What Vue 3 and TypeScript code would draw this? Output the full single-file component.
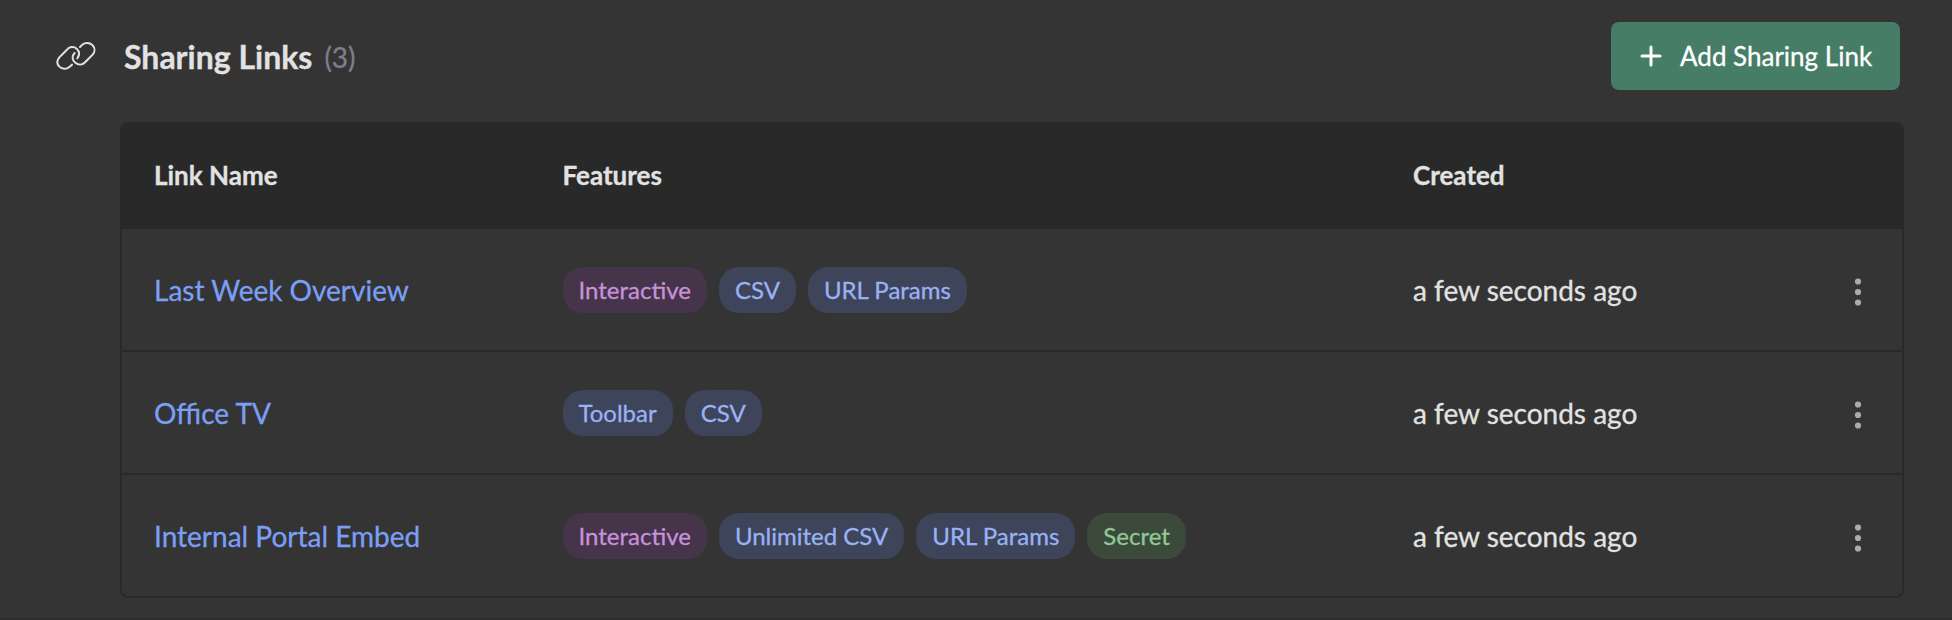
<script setup lang="ts">
type Tone = 'purple' | 'blue' | 'green'

interface Feature {
  label: string
  tone: Tone
}

interface SharingLink {
  name: string
  features: Feature[]
  created: string
}

const links: SharingLink[] = [
  {
    name: 'Last Week Overview',
    features: [
      { label: 'Interactive', tone: 'purple' },
      { label: 'CSV', tone: 'blue' },
      { label: 'URL Params', tone: 'blue' },
    ],
    created: 'a few seconds ago',
  },
  {
    name: 'Office TV',
    features: [
      { label: 'Toolbar', tone: 'blue' },
      { label: 'CSV', tone: 'blue' },
    ],
    created: 'a few seconds ago',
  },
  {
    name: 'Internal Portal Embed',
    features: [
      { label: 'Interactive', tone: 'purple' },
      { label: 'Unlimited CSV', tone: 'blue' },
      { label: 'URL Params', tone: 'blue' },
      { label: 'Secret', tone: 'green' },
    ],
    created: 'a few seconds ago',
  },
]
</script>

<template>
  <section class="panel">
    <header class="head">
      <svg class="chain" viewBox="0 0 180 150" fill="none" stroke="currentColor" stroke-width="6" stroke-linecap="round">
        <path d="M66 104L58 111C50 119 36 118 28 110C20 101 21 90 28 82L50 60C58 50 71 48 80 56C88 64 90 75 82 85" />
        <path d="M90 51L97 44C105 37 118 37 127 45C136 54 135 66 128 74L106 96C98 105 86 106 76 98C66 90 65 78 74 69" />
      </svg>
      <h2 class="title">Sharing Links</h2>
      <span class="count">({{ links.length }})</span>
      <button class="add" type="button">
        <svg class="plus" viewBox="0 0 22 22" stroke="currentColor" stroke-width="3" stroke-linecap="round">
          <path d="M11 2V20M2 11H20" />
        </svg>
        <span>Add Sharing Link</span>
      </button>
    </header>

    <div class="table">
      <div class="row row-head">
        <span>Link Name</span>
        <span>Features</span>
        <span>Created</span>
      </div>
      <div v-for="link in links" :key="link.name" class="row">
        <a class="name">{{ link.name }}</a>
        <div class="tags">
          <span v-for="f in link.features" :key="f.label" class="tag" :class="f.tone">{{ f.label }}</span>
        </div>
        <span class="created">{{ link.created }}</span>
        <svg class="dots" viewBox="0 0 8 28" fill="currentColor">
          <circle cx="4" cy="3.5" r="3.1" />
          <circle cx="4" cy="14" r="3.1" />
          <circle cx="4" cy="24.5" r="3.1" />
        </svg>
      </div>
    </div>
  </section>
</template>

<style>
body {
  background: #343434;
}
</style>

<style scoped>
.panel {
  box-sizing: border-box;
  height: 620px;
  padding: 22px 48px 0 50px;
  border-bottom: 2px solid #2c2c2c;
  background: #343434;
  color: #e2e2e2;
  font-family: Lato, sans-serif;
  font-size: 28px;
  -webkit-text-stroke: 0.3px currentColor;
}

.head {
  display: flex;
  align-items: center;
  height: 68px;
  margin-bottom: 32px;
}

.chain {
  width: 60px;
  height: 50px;
  margin: 0 14px 2px 0;
}

.title {
  margin: 2px 0 0;
  font-size: 32px;
  font-weight: 700;
  line-height: 40px;
}

.count {
  margin: 2px 0 0 12px;
  color: #7e7e8a;
  font-size: 28px;
}

.add {
  display: flex;
  align-items: center;
  box-sizing: border-box;
  width: 289px;
  height: 68px;
  margin: 0 4px 0 auto;
  padding: 0 0 0 29px;
  border: 0;
  border-radius: 8px;
  background: #467d67;
  color: #fff;
  font: 26px Lato, sans-serif;
  -webkit-text-stroke: 0.3px currentColor;
}

.plus {
  width: 22px;
  height: 22px;
  margin-right: 18px;
}

.table {
  overflow: hidden;
  box-sizing: border-box;
  height: 476px;
  border: 2px solid #292929;
  border-radius: 8px;
  margin-left: 70px;
}

.row {
  display: grid;
  grid-template-columns: 408.5px 850.5px 1fr 8px;
  align-items: center;
  height: 121px;
  padding: 0 40px 0 32px;
  border-bottom: 2px solid #292929;
}

.row:last-child {
  border-bottom: 0;
}

.row-head {
  box-sizing: border-box;
  height: 105px;
  padding-bottom: 3px;
  border-bottom: 0;
  background: #292929;
  font-size: 26px;
  font-weight: 700;
}

.name {
  color: #7b9ff5;
}

.tags {
  display: flex;
  gap: 12px;
}

.tag {
  height: 46px;
  padding: 0 16px;
  border-radius: 20px;
  font-size: 24px;
  line-height: 46px;
}

.purple {
  background: #46344a;
  color: #c792da;
}

.blue {
  background: #3e4459;
  color: #99b2f5;
}

.green {
  background: #3c4a3b;
  color: #92c896;
}

.dots {
  width: 8px;
  height: 28px;
  margin-top: 4px;
  color: #abaab2;
}
</style>
